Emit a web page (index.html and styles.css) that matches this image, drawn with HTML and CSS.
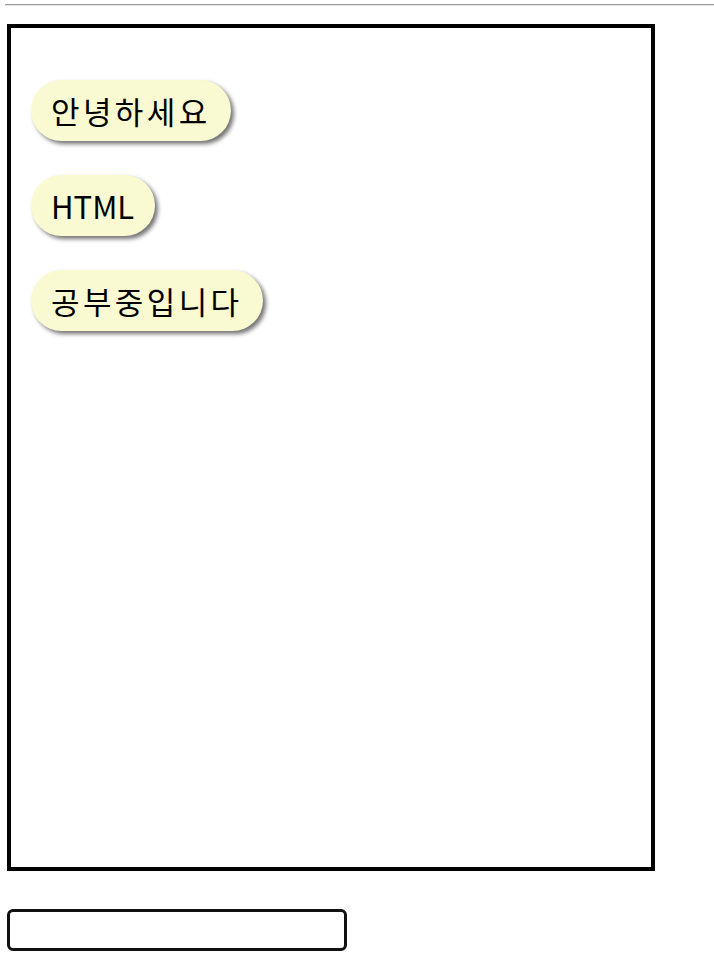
FILE: index.html
```html
<!DOCTYPE html>
<html lang="ko">
<head>
    <meta charset="UTF-8">
    <meta name="viewport" content="width=device-width, initial-scale=1.0">
    <title>채팅</title>
    <link rel="stylesheet" href="styles.css">
</head>
<body>
    <div class="top-rule"></div>
    <div class="chat-box">
        <div class="bubble ko">안녕하세요</div>
        <div class="bubble">HTML</div>
        <div class="bubble ko">공부중입니다</div>
    </div>
    <input type="text" class="chat-input">
</body>
</html>
```

FILE: styles.css
```css
body {
    margin: 0;
    padding: 0 0 0 7px;
    background: #fff;
    color: #000;
    font-family: "Noto Sans CJK KR", "Noto Sans", sans-serif;
}

.top-rule {
    margin: 4px 0 0 -2px;
    height: 0;
    border-top: 1px solid #9a9a9a;
    border-bottom: 1px solid #e6e6e6;
}

.chat-box {
    margin-top: 18px;
    border: 4px solid #000;
    padding: 52px 20px 0;
    box-sizing: border-box;
    width: 648px;
    height: 847px;
    display: flex;
    flex-direction: column;
    align-items: flex-start;
    gap: 34px;
}

.bubble {
    background: #fafad2;
    font-size: 31px;
    line-height: 45px;
    padding: 8px 21px 8px 20px;
    border-radius: 32px;
    box-shadow: 3px 3px 4px rgba(0, 0, 0, 0.55);
}

/* hangul in the shot is set wider than noto */
.bubble.ko {
    letter-spacing: 3.4px;
    padding-right: 20px;
}

.chat-input {
    display: block;
    margin-top: 38px;
    width: 340px;
    height: 42px;
    box-sizing: border-box;
    border: 3px solid #111;
    border-radius: 6px;
    padding: 0 8px;
    font-size: 16px;
    outline: none;
}
```
